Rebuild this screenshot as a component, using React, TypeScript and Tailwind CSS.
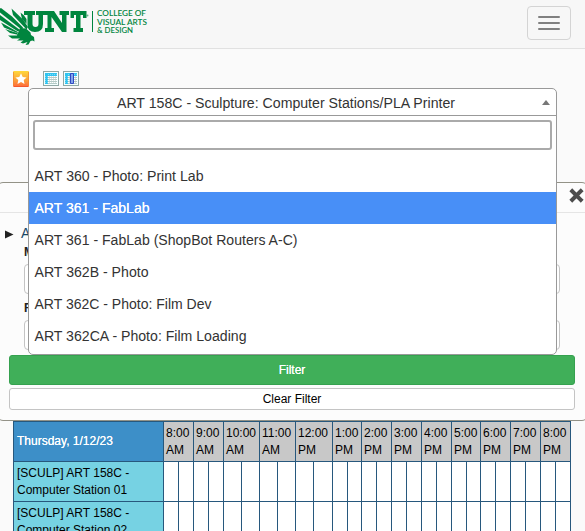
import type { ReactNode } from "react";

const hours = [
  { label: "8:00", half: "AM", w: "w-[30px]", first: "w-[15px]" },
  { label: "9:00", half: "AM", w: "w-[30px]", first: "w-[15px]" },
  { label: "10:00", half: "AM", w: "w-[36px]", first: "w-[18px]" },
  { label: "11:00", half: "AM", w: "w-[36px]", first: "w-[18px]" },
  { label: "12:00", half: "PM", w: "w-[37px]", first: "w-[18px]" },
  { label: "1:00", half: "PM", w: "w-[29px]", first: "w-[15px]" },
  { label: "2:00", half: "PM", w: "w-[30px]", first: "w-[15px]" },
  { label: "3:00", half: "PM", w: "w-[30px]", first: "w-[15px]" },
  { label: "4:00", half: "PM", w: "w-[30px]", first: "w-[15px]" },
  { label: "5:00", half: "PM", w: "w-[29px]", first: "w-[15px]" },
  { label: "6:00", half: "PM", w: "w-[30px]", first: "w-[15px]" },
  { label: "7:00", half: "PM", w: "w-[30px]", first: "w-[15px]" },
  { label: "8:00", half: "PM", w: "w-[30px]", first: "w-[15px]" },
];

const options = [
  { text: "ART 360 - Photo: Print Lab", w: 169 },
  { text: "ART 361 - FabLab", w: 115 },
  { text: "ART 361 - FabLab (ShopBot Routers A-C)", w: 263 },
  { text: "ART 362B - Photo", w: 114 },
  { text: "ART 362C - Photo: Film Dev", w: 177 },
  { text: "ART 362CA - Photo: Film Loading", w: 212 },
];

const stations = ["01", "02"];

/* Text with a fixed drawn width */
function Fit({ w, size, y, children, weight, fill, x = 0, family }: {
  w: number; size: number; y: number; children: ReactNode; weight?: number; fill?: string; x?: number; family?: string;
}) {
  return (
    <text x={x} y={y} textLength={w} lengthAdjust="spacingAndGlyphs" fontSize={size} fontWeight={weight} fill={fill} fontFamily={family}>
      {children}
    </text>
  );
}

function Logo() {
  return (
    <svg width="150" height="48" viewBox="0 0 150 48" fill="#00853e" className="block">
      <path d="M1 8 12 16.500 23 27.500 22 30 0 12.500V8.500Z" />
      <path d="M11.500 8.500 23 19.500 28 27 26.500 29.500 13 15Z" />
      <path d="M20.500 12.500 24 15.500 26.500 19V24L22 19Z" />
      <path d="M0 15 20 30 18 31.500 0 20Z" />
      <path d="M1 22.500 17 31.500 18.500 33.500 4 27.500Z" />
      <path d="M5 29 17 33 19 35 10 33Z" />
      <path d="M20 28 26 28.500 30.500 32.500 31 35 34 37 34.500 41.500 32.500 40.500 30.500 41 28.500 44.500 25.500 45 27.500 42 23 43.500 20.500 42.500 23.500 40.500 17 40.500 20 38.500 12 38.500 8 35.500 17 35.500Z" />
      <path d="M24 11H35V15H32.500V24Q32.500 27 35.500 27 38.500 27 38.500 24V15H36V11H45V15H43V24Q43 32 35 32 27.500 32 27.500 25V15H24Z" />
      <path d="M45 11H54L62 23V15H59.500V11H69V15H66.500V32H62L51.500 17V28H54V32H45V28H47.500V15H45Z" />
      <path d="M70.500 11H86.500V18H83V15H80.500V28H83V32H73.500V28H76V15H74V18H70.500Z" />
      <circle cx="87.500" cy="15.500" r="1" opacity=".6" />
      <path d="M92 11h1v21h-1z" />
      <Fit x={97} y={16.400} w={49} size={7.600} weight={600} family="Lato, sans-serif">COLLEGE OF</Fit>
      <Fit x={97} y={24.500} w={50} size={7.600} weight={600} family="Lato, sans-serif">VISUAL ARTS</Fit>
      <Fit x={97} y={32.700} w={36} size={7.600} weight={600} family="Lato, sans-serif">&amp; DESIGN</Fit>
    </svg>
  );
}

function StarIcon() {
  return (
    <svg width="16" height="16" viewBox="0 0 16 16">
      <defs>
        <linearGradient id="sun" x2="0" y2="1">
          <stop stopColor="#ffd83b" />
          <stop offset=".55" stopColor="#fba33b" />
          <stop offset="1" stopColor="#ff663b" />
        </linearGradient>
      </defs>
      <rect width="16" height="16" rx="1" fill="url(#sun)" />
      <path d="M.5 1V15M15.500 1V15" stroke="#f28a30" opacity=".7" />
      <path d="M1 15.500H15" stroke="#f4572c" />
      <path d="m8 2.300 1.700 3.600 3.900.5-2.900 2.700.8 3.900L8 11.100l-3.500 1.900.8-3.900L2.400 6.400l3.900-.5Z" fill="#fff" />
    </svg>
  );
}

function CalendarIcon({ column }: { column?: boolean }) {
  return (
    <svg width="16" height="15" viewBox="0 0 16 15">
      <rect x=".5" y=".5" width="15" height="14" fill="#f4ffff" stroke="#8fa8a5" />
      <path d="M2 2H14V5H5V13H2Z" fill="#2fc4f0" />
      <path d="M5 5h9v8H5z" fill="#b3cac6" />
      <path d="M5 5.500h9M5 7.500h9M5 9.500h9M5 11.500h9" stroke="#fff" strokeDasharray="1.500 .5" />
      <path d="M2 5.500h3M2 7.500h3M2 9.500h3M2 11.500h3M5 3.500h9" stroke="#79d9f4" strokeDasharray="1 1" />
      {column && <path d="M7.500 2.500h3v10h-3z" fill="#82a5ec" stroke="#2f49c4" />}
    </svg>
  );
}

function FieldRow({ label }: { label: string }) {
  return (
    <div className="h-[56px]">
      <div className="h-[21px] text-xs leading-[19px] font-bold">{label}</div>
      <div className="h-[30px] rounded border border-[#c4c4c4] bg-white" />
    </div>
  );
}

function FilterPanel() {
  return (
    <section className="absolute top-[182px] left-[-3px] flex h-[239px] w-[591px] flex-col rounded-md border border-[#939287] bg-[#fcfcfc]">
      <div className="flex h-[30px] shrink-0 justify-end border-b border-[#e5e5e5] pr-[3px]">
        <svg className="mt-[5px]" width="15" height="15" viewBox="0 0 15 15">
          <path d="m3.200 3.200 8.600 8.600m0-8.600-8.600 8.600" stroke="#4c4c4c" strokeWidth="4" strokeLinecap="square" strokeLinejoin="round" />
        </svg>
      </div>
      <div className="flex h-[30px] shrink-0 items-end pl-[7px]">
        <svg width="9" height="9" viewBox="0 0 9 9" className="mb-[4px]"><path d="M0 .5 8.500 4.500 0 8.500Z" fill="#222" /></svg>
        <span className="ml-[7px] text-sm leading-[19px] text-[#174766]">A</span>
      </div>
      <div className="mr-[27px] ml-[26px] h-[112px] shrink-0">
        <FieldRow label="M" />
        <FieldRow label="F" />
      </div>
      <div className="mr-[12px] ml-[11px] flex flex-col gap-[3px] text-xs text-black">
        <button className="h-[30px] rounded-[3px] border border-[#35a14f] bg-[#40af59] text-white [text-shadow:0_0_0.5px_white]">Filter</button>
        <button className="h-[22px] rounded-[3px] border border-[#c4c4c4] bg-white">Clear Filter</button>
      </div>
    </section>
  );
}

function RoomSelect() {
  return (
    <div className="absolute top-[88px] left-[28px] h-[267px] w-[529px] rounded-[5px] border border-[#999] bg-white text-sm text-[#333]">
      <div className="flex h-[27px] items-start border-b border-[#999]">
        <svg width="513" height="26"><Fit x={88} y={19} w={338} size={14} fill="#333">ART 158C - Sculpture: Computer Stations/PLA Printer</Fit></svg>
        <svg className="mt-[11px]" width="8" height="5"><path d="M0 5 4 0 8 5Z" fill="#777" /></svg>
      </div>
      <div className="p-1">
        <input aria-label="Search rooms" className="block h-[30px] w-full rounded-[3px] border-2 border-[#aaa] bg-white outline-none" />
      </div>
      <ul className="mt-[6px]">
        {options.map((option, i) => (
          <li key={option.text} className={i === 1 ? "h-8 bg-[#488ff7] pl-[5px] text-white [text-shadow:0_0_0.5px_white]" : "h-8 pl-[5px]"}>
            <svg width="300" height="32" className="block"><Fit x={0.5} y={21} w={option.w} size={14} fill="currentColor">{option.text}</Fit></svg>
          </li>
        ))}
      </ul>
    </div>
  );
}

export default function App() {
  return (
    <div className="relative h-[531px] w-[585px] overflow-hidden bg-[#fafafa] font-['Liberation_Sans',Arial,sans-serif] text-[#222]">
      <header className="flex h-[49px] justify-between border-b border-[#e1e1e1] bg-[#f7f7f7]">
        <Logo />
        <button aria-label="Menu" className="mt-[6px] mr-[14px] flex h-[34px] w-[44px] flex-col items-center justify-center gap-[4px] rounded border border-[#d4d4d4]">
          <span className="h-[2px] w-[22px] rounded-full bg-[#808080]" />
          <span className="h-[2px] w-[22px] rounded-full bg-[#808080]" />
          <span className="h-[2px] w-[22px] rounded-full bg-[#808080]" />
        </button>
      </header>
      <main className="px-[13px] pt-[22px]">
        <div className="flex h-[350px] items-start">
          <StarIcon />
          <div className="ml-[14px] flex gap-1"><CalendarIcon /><CalendarIcon column /></div>
        </div>
        <div className="w-[558px] border-t border-l border-[#27587d] text-xs leading-[17px] text-black">
          <div className="flex h-10">
            <div className="flex w-[150px] items-center border-r border-b border-[#27587d] bg-[#3d8fc8] pl-[3px] text-white [text-shadow:0_0_0.5px_white]">Thursday, 1/12/23</div>
            {hours.map((hour, i) => (
              <div key={i} className={`${hour.w} shrink-0 border-r border-b border-[#27587d] bg-[#c8c8c8] pt-[3px] pl-[2px]`}>
                <div>{hour.label}</div><div>{hour.half}</div>
              </div>
            ))}
          </div>
          {stations.map((station) => (
            <div key={station} className="flex h-10 bg-white">
              <div className="w-[150px] border-r border-b border-[#27587d] bg-[#76d2e3] pt-[3px] pl-[3px]">[SCULP] ART 158C -<br />Computer Station {station}</div>
              {hours.map((hour, i) => (
                <div key={i} className={`${hour.w} flex shrink-0 border-r border-b border-[#27587d]`}>
                  <div className={`${hour.first} border-r border-[#27587d]`} />
                </div>
              ))}
            </div>
          ))}
        </div>
      </main>
      <FilterPanel />
      <RoomSelect />
    </div>
  );
}
